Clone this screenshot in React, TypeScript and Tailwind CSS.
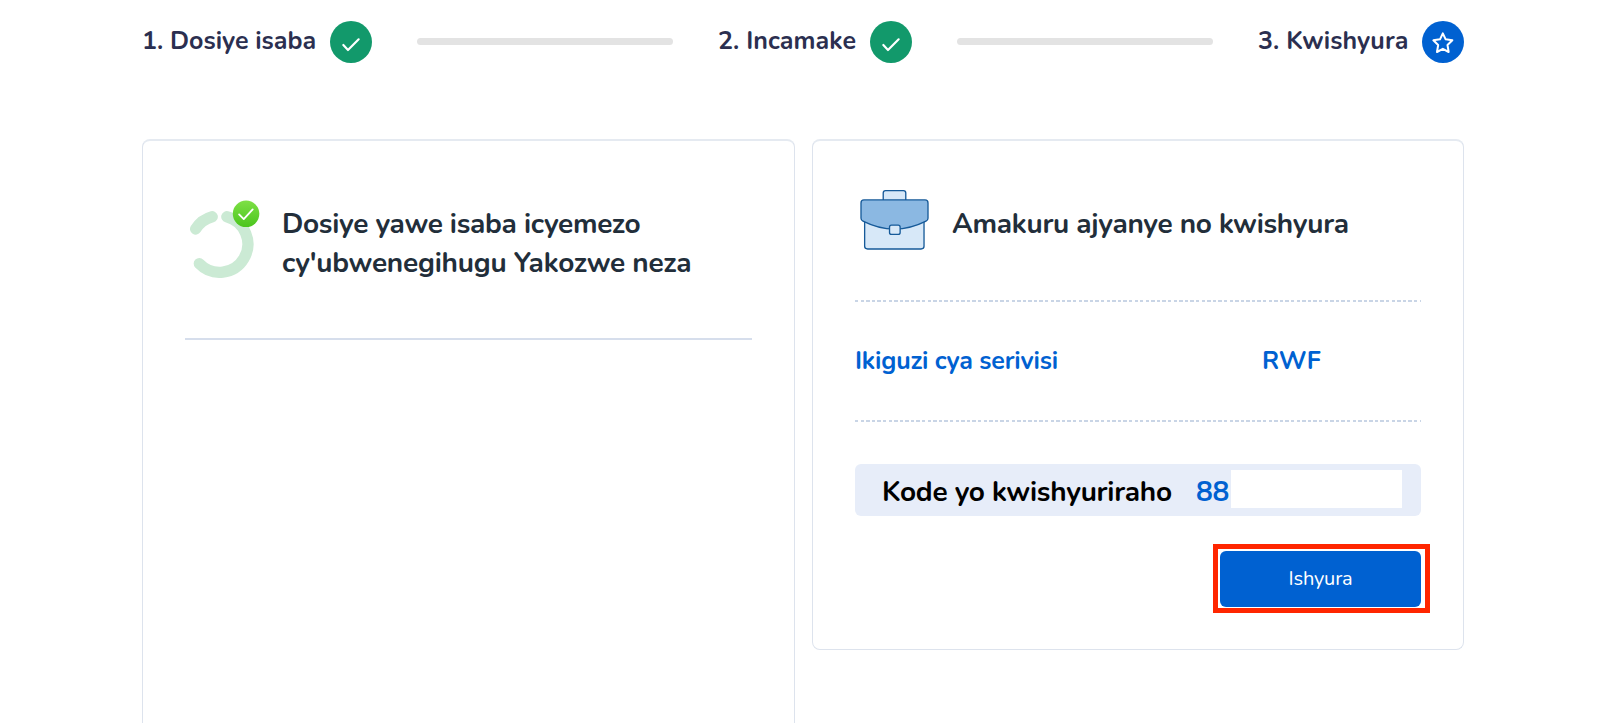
import { Fragment } from "react";

interface Step {
  label: string;
  done: boolean;
  labelClass: string;
}

const steps: Step[] = [
  { label: "1. Dosiye isaba", done: true, labelClass: "w-[188px]" },
  { label: "2. Incamake", done: true, labelClass: "w-[152px] tracking-[0.08px]" },
  { label: "3. Kwishyura", done: false, labelClass: "w-[164px] tracking-[0.1px]" },
];

function StepIcon({ done }: { done: boolean }) {
  if (done) {
    return (
      <span className="block w-[42px] h-[42px] shrink-0 rounded-full bg-[#12996b]">
        <svg viewBox="0 0 126 126" fill="none" className="w-full h-full">
          <path d="M40 72L54 87L86 55" stroke="#fff" strokeWidth="6.500" strokeLinecap="round" strokeLinejoin="round" />
        </svg>
      </span>
    );
  }

  return (
    <span className="block w-[42px] h-[42px] shrink-0 rounded-full bg-[#0061d1]">
      <svg viewBox="0 0 126 126" fill="none" className="w-full h-full">
        <path
          d="M62.500 37L71 55L91 58L76.500 72L80 93L62.500 83.500L45 93L48.500 72L34 58L54 55Z"
          stroke="#fff"
          strokeWidth="6"
          strokeLinejoin="round"
        />
      </svg>
    </span>
  );
}

function SuccessIcon() {
  return (
    <svg viewBox="56 58 214 240" fill="none" className="w-[71px] h-20 shrink-0">
      <defs>
        <linearGradient id="badge" x1="0" y1="0" x2="0" y2="1">
          <stop offset="0" stopColor="#7ee046" />
          <stop offset="1" stopColor="#4bc51d" />
        </linearGradient>
      </defs>
      <path d="M76 148A84.500 84.500 0 0 1 126 111" stroke="#cbead4" strokeWidth="34" strokeLinecap="round" />
      <path d="M170 111A85 85 0 1 1 87 252" stroke="#cbead4" strokeWidth="34" strokeLinecap="round" />
      <circle cx="228" cy="102" r="40" fill="url(#badge)" />
      <path d="M207 104L221 118L248 89" stroke="#fff" strokeWidth="5.500" strokeLinecap="round" strokeLinejoin="round" />
    </svg>
  );
}

function BriefcaseIcon() {
  return (
    <svg viewBox="60 57 208 182" stroke="#165a99" strokeWidth="4" strokeLinejoin="round" className="w-[69px] h-[61px] shrink-0">
      <path d="M130 90V68Q130 61 137 61H191Q198 61 198 68V90" fill="#d7e8f8" />
      <path d="M74 140V229Q74 237 83 237H244Q253 237 253 229V140Z" fill="#d7e8f8" />
      <path d="M72 89H256Q265 89 265 98V144Q265 150 259 153Q164 201 69 153Q63 150 63 144V98Q63 89 72 89Z" fill="#8bb8e2" />
      <rect x="149" y="165" width="32" height="28" rx="6" fill="#d7e8f8" />
    </svg>
  );
}

function DashedLine() {
  return (
    <div className="h-[2px] bg-[repeating-linear-gradient(90deg,#c9d5e6_0px,#c9d5e6_3.400px,transparent_3.400px,transparent_5.590px)]" />
  );
}

export default function App() {
  return (
    <div className="h-[723px] overflow-hidden bg-white pl-[142px] font-['Nunito','Lato',sans-serif]">
      <div className="flex items-center w-[1322px] h-[42px] mt-[21px]">
        {steps.map((step, index) => (
          <Fragment key={step.label}>
            {index > 0 && <div className="flex-1 h-[7px] mx-[45px] mb-px rounded-full bg-[#e3e3e3]" />}
            <span className={`${step.labelClass} self-start shrink-0 whitespace-nowrap text-[25px] leading-[40px] font-bold text-[#2b2f50]`}>
              {step.label}
            </span>
            <StepIcon done={step.done} />
          </Fragment>
        ))}
      </div>

      <div className="flex items-start gap-[17px] mt-[76px] w-[1322px]">
        <section className="w-[653px] h-[700px] px-[42px] border border-t-2 border-[#dde3ed] border-t-[#e5eaf1] rounded-lg">
          <div className="flex pt-[58px] gap-[22px]">
            <div className="pl-[4px]">
              <SuccessIcon />
            </div>
            <h2 className="pt-[6px] text-[28px] leading-[39px] font-bold text-[#222e3a] whitespace-nowrap">
              <span className="block tracking-[-0.300px]">Dosiye yawe isaba icyemezo</span>
              <span className="block tracking-[-0.230px]">cy'ubwenegihugu Yakozwe neza</span>
            </h2>
          </div>
          <hr className="mt-[55px] border-0 h-[2px] bg-[#d6deec]" />
        </section>

        <section className="w-[652px] h-[511px] px-[42px] border border-t-2 border-[#dde3ed] border-t-[#e5eaf1] rounded-lg">
          <div className="flex h-[159px] pt-[48px] pl-[5px] gap-[23px]">
            <BriefcaseIcon />
            <h2 className="pt-[16px] text-[28px] leading-[39px] tracking-[-0.300px] font-bold text-[#222e3a] whitespace-nowrap">
              Amakuru ajyanye no kwishyura
            </h2>
          </div>
          <DashedLine />
          <div className="flex items-center h-[118px] pt-[2px] text-[25px] font-bold text-[#0061d1] whitespace-nowrap">
            <span className="w-[407px] tracking-[-0.200px]">Ikiguzi cya serivisi</span>
            <span>RWF</span>
          </div>
          <DashedLine />

          <div className="flex h-[52px] mt-[42px] pl-[27px] pt-[6px] rounded-md bg-[#e7edf9] text-[28px] leading-[44px] font-bold whitespace-nowrap">
            <span className="w-[314px] text-black tracking-[-0.260px]">Kode yo kwishyuriraho</span>
            <span className="w-[35px] text-[#0061d1] tracking-[-0.300px]">88</span>
            <span className="w-[171px] h-[38px] bg-white" />
          </div>

          <div className="flex justify-end mt-[28px] -mr-[9px]">
            <div className="w-[217px] h-[69px] border-5 border-[#ff2600] px-[2px] pt-[2px]">
              <button type="button" className="w-[201px] h-[56px] rounded-md bg-[#0061d1] text-white text-[20px] tracking-[-0.150px]">
                Ishyura
              </button>
            </div>
          </div>
        </section>
      </div>
    </div>
  );
}
